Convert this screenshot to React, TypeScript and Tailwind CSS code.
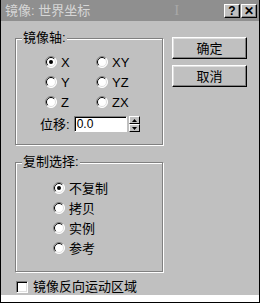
import React from "react";

const font = "font-['Liberation_Sans','Noto_Sans_CJK_SC',sans-serif]";

function Radio({ checked }: { checked?: boolean }) {
  return (
    <svg width="12" height="12" viewBox="0 0 12 12" className="shrink-0">
      <circle cx="6" cy="6" r="5.5" fill="#fff" />
      <path d="M9.9 2.1 A5.5 5.5 0 0 0 2.1 9.9" stroke="#808080" fill="none" />
      <path d="M2.1 9.9 A5.5 5.5 0 0 0 9.9 2.1" stroke="#ffffff" fill="none" />
      <path d="M9.2 2.8 A4.5 4.5 0 0 0 2.8 9.2" stroke="#000" fill="none" />
      <path d="M2.8 9.2 A4.5 4.5 0 0 0 9.2 2.8" stroke="#dfdfdf" fill="none" />
      {checked && <circle cx="6" cy="6" r="2" fill="#000" />}
    </svg>
  );
}

function RadioItem({ label, checked }: { label: string; checked?: boolean }) {
  return (
    <div className="flex h-[20px] items-center gap-[4px]">
      <Radio checked={checked} />
      <span className="text-[13px] leading-none text-black">{label}</span>
    </div>
  );
}

function GroupBox({
  title,
  className,
  children,
}: {
  title: string;
  className: string;
  children: React.ReactNode;
}) {
  return (
    <div
      className={`relative border border-[#808080] shadow-[inset_1px_1px_0_#fff,1px_1px_0_#fff] ${className}`}
    >
      <span className="absolute -top-[9px] left-[6px] bg-[#c0c0c0] px-[1px] text-[13px] leading-[16px] text-black">
        {title}
      </span>
      {children}
    </div>
  );
}

function Button({ label }: { label: string }) {
  return (
    <div className="flex h-[22px] w-[75px] items-center justify-center border border-b-black border-l-white border-r-black border-t-white bg-[#c0c0c0] text-[13px] leading-none text-black shadow-[inset_-1px_-1px_0_#808080,inset_1px_1px_0_#dfdfdf]">
      {label}
    </div>
  );
}

function TitleButton({ children }: { children: React.ReactNode }) {
  return (
    <div className="flex h-[14px] w-[16px] items-center justify-center border border-b-black border-l-white border-r-black border-t-white bg-[#c0c0c0] text-[12px] font-bold leading-none text-black shadow-[inset_-1px_-1px_0_#808080]">
      {children}
    </div>
  );
}

export default function App() {
  return (
    <div className={`h-[306px] w-[261px] bg-white ${font}`}>
      <div className="flex h-[303px] w-[260px] flex-col border-b border-l border-r border-black">
        <div className="flex h-[21px] items-center bg-[#8f8f8f] pl-[4px] pr-[2px]">
          <span className="text-[13px] leading-none text-[#d6d6d6]">镜像: 世界坐标</span>
          <span className="ml-[84px] font-['Liberation_Serif',serif] text-[15px] leading-none text-[#a8a8a8]">
            I
          </span>
          <div className="ml-auto flex gap-[1px]">
            <TitleButton>?</TitleButton>
            <TitleButton>✕</TitleButton>
          </div>
        </div>

        <div className="flex h-[274px] bg-[#c0c0c0] pl-[14px]">
          <div className="flex w-[148px] flex-col">
            <GroupBox title="镜像轴:" className="mt-[17px] h-[107px] pl-[29px] pt-[13px]">
              <div className="grid grid-cols-[51px_auto]">
                <RadioItem label="X" checked />
                <RadioItem label="XY" />
                <RadioItem label="Y" />
                <RadioItem label="YZ" />
                <RadioItem label="Z" />
                <RadioItem label="ZX" />
              </div>
              <div className="-ml-[5px] mt-[4px] flex items-center">
                <span className="text-[13px] leading-none text-black">位移:</span>
                <div className="ml-[4px] flex h-[16px] w-[53px] items-center border border-b-white border-l-[#808080] border-r-white border-t-[#808080] bg-white pl-[2px] text-[12px] leading-none text-black shadow-[inset_1px_1px_0_#000]">
                  0.0
                </div>
                <div className="ml-[2px] flex h-[16px] w-[11px] flex-col">
                  <div className="flex h-[8px] items-center justify-center border border-b-black border-l-white border-r-black border-t-white bg-[#c0c0c0]">
                    <svg width="5" height="3" viewBox="0 0 5 3">
                      <path d="M2.5 0 L5 3 L0 3 Z" fill="#000" />
                    </svg>
                  </div>
                  <div className="flex h-[8px] items-center justify-center border border-b-black border-l-white border-r-black border-t-white bg-[#c0c0c0]">
                    <svg width="5" height="3" viewBox="0 0 5 3">
                      <path d="M0 0 L5 0 L2.5 3 Z" fill="#000" />
                    </svg>
                  </div>
                </div>
              </div>
            </GroupBox>

            <GroupBox title="复制选择:" className="mt-[17px] h-[110px] pl-[37px] pt-[15px]">
              <RadioItem label="不复制" checked />
              <RadioItem label="拷贝" />
              <RadioItem label="实例" />
              <RadioItem label="参考" />
            </GroupBox>

            <div className="ml-[1px] mt-[8px] flex items-center gap-[5px]">
              <div className="h-[12px] w-[12px] border border-b-white border-l-[#808080] border-r-white border-t-[#808080] bg-white shadow-[inset_1px_1px_0_#000,inset_-1px_-1px_0_#dfdfdf]" />
              <span className="text-[13px] leading-none text-black">镜像反向运动区域</span>
            </div>
          </div>

          <div className="ml-[9px] mt-[16px] flex flex-col gap-[6px]">
            <Button label="确定" />
            <Button label="取消" />
          </div>
        </div>
      </div>
    </div>
  );
}
